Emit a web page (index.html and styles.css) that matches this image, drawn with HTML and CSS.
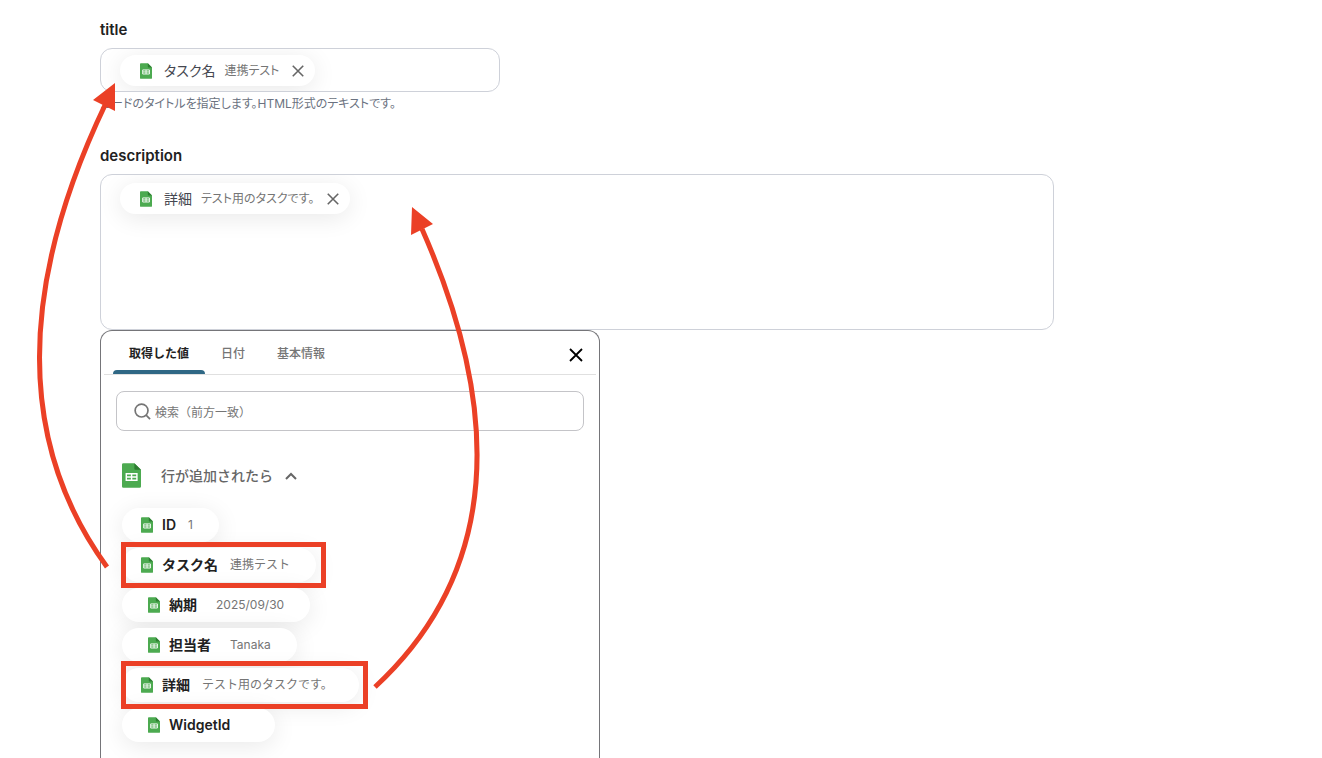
FILE: index.html
```html
<!DOCTYPE html>
<html lang="ja">
<head>
<meta charset="utf-8">
<meta name="viewport" content="width=device-width, initial-scale=1">
<title>title / description</title>
<link rel="stylesheet" href="styles.css">
</head>
<body>
<svg class="defs" aria-hidden="true">
  <symbol id="sheet" viewBox="0 0 20 26">
    <path d="M1.500 0H13l7 7v17.500a1.500 1.500 0 0 1-1.500 1.500h-17A1.500 1.500 0 0 1 0 24.500v-23A1.500 1.500 0 0 1 1.500 0z" fill="#4caa50"/>
    <path d="M13 0l7 7h-6a1 1 0 0 1-1-1z" fill="#2e7d32"/>
    <path d="M4.500 11.200h11.200v6.800H4.500zM4.500 14.600h11.200M10.100 11.200V18" fill="none" stroke="#fff" stroke-width="1.500"/>
  </symbol>
  <symbol id="cross" viewBox="0 0 16 16">
    <path d="M2 2l12 12M14 2L2 14" fill="none" stroke="currentColor" stroke-width="1.800"/>
  </symbol>
</svg>
<main class="page">
  <section class="field field-title">
    <label class="label" for="title">title</label>
    <div class="box box-single">
      <span class="chip token">
        <svg class="sheet-small"><use href="#sheet"/></svg>
        <span class="name">タスク名</span><span class="value">連携テスト</span>
        <button class="remove" type="button" aria-label="削除"><svg><use href="#cross"/></svg></button>
      </span>
      <input class="entry" id="title" type="text">
    </div>
    <p class="help">カードのタイトルを指定します。HTML形式のテキストです。</p>
  </section>
  <section class="field">
    <label class="label" for="description">description</label>
    <div class="box box-multi">
      <span class="chip token">
        <svg class="sheet-small"><use href="#sheet"/></svg>
        <span class="name">詳細</span><span class="value">テスト用のタスクです。</span>
        <button class="remove" type="button" aria-label="削除"><svg><use href="#cross"/></svg></button>
      </span>
      <textarea class="entry" id="description"></textarea>
    </div>
  </section>
  <section class="panel">
    <header class="panel-head">
      <nav class="tabs" role="tablist">
        <button class="tab active" type="button" role="tab" aria-selected="true">取得した値</button>
        <button class="tab" type="button" role="tab">日付</button>
        <button class="tab" type="button" role="tab">基本情報</button>
      </nav>
      <button class="close" type="button" aria-label="閉じる"><svg><use href="#cross"/></svg></button>
    </header>
    <div class="panel-body">
      <div class="search">
        <svg viewBox="0 0 18 18"><circle cx="8" cy="8" r="6.800"/><path d="M12.800 12.800L17 17"/></svg>
        <input type="search" aria-label="検索" placeholder="検索（前方一致）">
      </div>
      <button class="group" type="button" aria-expanded="true">
        <svg class="sheet-large"><use href="#sheet"/></svg>
        <span>行が追加されたら</span>
        <svg class="chevron" viewBox="0 0 12 8"><path d="M1 7l5-5 5 5"/></svg>
      </button>
      <div class="values">
        <button class="chip option" type="button"><svg class="sheet-small"><use href="#sheet"/></svg><span class="name">ID</span><span class="value">1</span></button>
        <button class="chip option" type="button"><svg class="sheet-small"><use href="#sheet"/></svg><span class="name">タスク名</span><span class="value">連携テスト</span></button>
        <button class="chip option wide" type="button"><svg class="sheet-small"><use href="#sheet"/></svg><span class="name">納期</span><span class="value">2025/09/30</span></button>
        <button class="chip option wide" type="button"><svg class="sheet-small"><use href="#sheet"/></svg><span class="name">担当者</span><span class="value">Tanaka</span></button>
        <button class="chip option" type="button"><svg class="sheet-small"><use href="#sheet"/></svg><span class="name">詳細</span><span class="value">テスト用のタスクです。</span></button>
        <button class="chip option wide" type="button"><svg class="sheet-small"><use href="#sheet"/></svg><span class="name">WidgetId</span><span class="value"></span></button>
      </div>
    </div>
  </section>
</main>
<svg class="marks" width="600" height="758" viewBox="0 0 600 758" aria-hidden="true">
  <g fill="none" stroke="#eb4026" stroke-width="5">
    <path d="M107 567Q-27.500 382 106 103"/>
    <path d="M375 687Q552 523 422 229"/>
    <path d="M123.500 544.500h200v41h-200zM123.500 663.500h242v43h-242z"/>
  </g>
  <path d="M115 83L93 100L115 111zM412 207L433 224L411 235z" fill="#eb4026"/>
</svg>
</body>
</html>
```
FILE: styles.css
```css
* { box-sizing: border-box; }

body {
  margin: 0;
  position: relative;
  background: #fff;
  color: #212121;
  font-family: Inter, "Noto Sans CJK JP", sans-serif;
  font-size: 14px;
  line-height: 20px;
}

button, input, textarea {
  margin: 0;
  padding: 0;
  border: 0;
  background: none;
  color: inherit;
  font: inherit;
  outline: 0;
}

button { cursor: pointer; }
svg { display: block; flex: none; }
.defs { position: absolute; width: 0; height: 0; }

.page {
  display: flex;
  flex-direction: column;
  min-height: 100vh;
  padding: 20px 268px 0 100px;
}

.field { display: flex; flex-direction: column; }
.field-title { margin-bottom: 34px; }
.label { margin-bottom: 8px; font-size: 15px; font-weight: 600; }

.box {
  display: flex;
  align-items: flex-start;
  padding: 6px 19px;
  border: 1px solid #ced1d9;
  border-radius: 12px;
  overflow: hidden;
}
.box-single { width: 400px; max-width: 100%; height: 44px; }
.box-multi { height: 156px; padding-top: 8px; }
.entry { flex: 1; min-width: 0; height: 100%; resize: none; }

.help {
  margin: 4px 0 0;
  color: #6b7280;
  font-size: 12px;
  line-height: 16px;
  font-feature-settings: "palt";
}

.chip {
  display: flex;
  align-items: center;
  border-radius: 17px;
  background: #fff;
  box-shadow: 0 4px 24px rgba(0, 0, 0, 0.09);
  white-space: nowrap;
}
.value { color: #757575; font-size: 12px; }
.sheet-small { width: 12px; height: 16px; }

.token {
  height: 31px;
  padding: 0 10px 0 20px;
  font-feature-settings: "palt";
}
.token .name { margin-left: 12px; color: #454750; }
.token .value { margin: 0 12px 0 9px; }
.remove svg { width: 14px; height: 14px; color: #666; }

.panel {
  display: flex;
  flex: 1;
  flex-direction: column;
  width: 500px;
  max-width: 100%;
  padding: 0 3px;
  border: 1px solid #757579;
  border-bottom: 0;
  border-radius: 12px 12px 0 0;
}

.panel-head {
  display: flex;
  justify-content: space-between;
  height: 44px;
  padding: 0 12px 0 9px;
  border-bottom: 1px solid #e0e0e0;
}
.tabs { display: flex; }
.tab {
  padding: 6px 16px 0;
  border-bottom: 4px solid transparent;
  color: #757575;
  font-size: 12px;
  font-weight: 500;
}
.active {
  position: relative;
  color: #212121;
  font-weight: 700;
}
.active::after {
  content: "";
  position: absolute;
  inset: auto 0 -4px;
  height: 4px;
  border-radius: 4px 4px 0 0;
  background: #2f6885;
}
.close { padding-top: 4px; }
.close svg { width: 16px; height: 16px; color: #000; }

.panel-body { padding: 16px 12px; }

.search {
  display: flex;
  align-items: center;
  gap: 4px;
  height: 40px;
  padding: 0 17px;
  border: 1px solid #c4c4c8;
  border-radius: 8px;
}
.search svg { width: 17px; height: 17px; fill: none; stroke: #757575; stroke-width: 1.800; }
.search input { flex: 1; min-width: 0; padding-top: 3px; font-size: 12px; }
.search input::placeholder { color: #757575; opacity: 1; }

.group {
  display: flex;
  align-items: center;
  margin: 32px 6px 20px;
  color: #666;
  font-weight: 500;
}
.group span { margin: 0 12px 0 20px; }
.sheet-large { width: 19px; height: 25px; }
.chevron { width: 12px; height: 8px; fill: none; stroke: #666; stroke-width: 2; }

.values {
  display: flex;
  flex-direction: column;
  align-items: flex-start;
  gap: 6px;
  padding-left: 6px;
}
.option { height: 34px; padding: 0 26px 0 19px; }
.option .name { margin-left: 9px; font-weight: 600; }
.option .value { margin-left: 12px; }
.wide { padding-left: 26px; }
.wide .value { margin-left: 19px; }

.marks { position: absolute; top: 0; left: 0; pointer-events: none; }
```
